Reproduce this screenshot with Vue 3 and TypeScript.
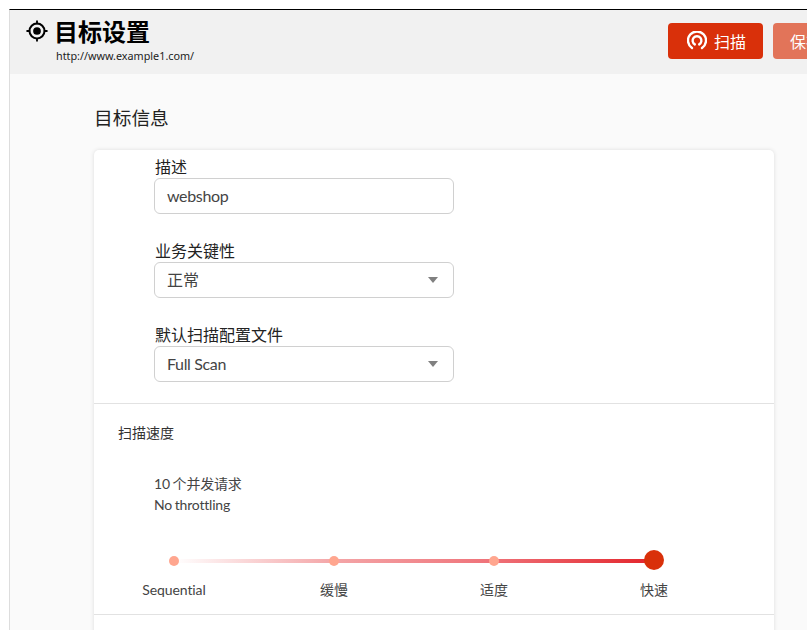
<script setup lang="ts">
const stops: string[] = ['Sequential', '缓慢', '适度', '快速']
</script>

<template>
  <div class="shell">
    <main class="page">
      <header class="topbar">
        <div class="heading">
          <div class="title-row">
            <svg class="target" viewBox="0 0 24 24" width="22" height="22" aria-hidden="true">
              <circle cx="12" cy="12" r="8.2" fill="none" stroke="#000" stroke-width="2.2" />
              <circle cx="12" cy="12" r="4.2" fill="#000" />
              <path d="M12 0.5v4M12 19.5v4M0.5 12h4M19.5 12h4" stroke="#000" stroke-width="2" />
            </svg>
            <h1>目标设置</h1>
          </div>
          <div class="url">http://www.example1.com/</div>
        </div>
        <div class="actions">
          <button class="btn scan" type="button">
            <svg class="scan-icon" viewBox="0 0 20 20" width="20" height="20" fill="none" stroke="#fff" stroke-width="2.4" stroke-linecap="round" aria-hidden="true">
              <path d="M5 17A9 9 0 1 1 15 17" />
              <path d="M7.8 13.4A4.4 4.4 0 1 1 12.2 13.4" />
            </svg>
            <span>扫描</span>
          </button>
          <button class="btn save" type="button">保存</button>
        </div>
      </header>

      <section class="content">
        <h2>目标信息</h2>
        <div class="card">
          <div class="fields">
            <label class="field">
              <span class="label">描述</span>
              <span class="control latin">webshop</span>
            </label>
            <label class="field">
              <span class="label">业务关键性</span>
              <span class="control">正常<i class="caret"></i></span>
            </label>
            <label class="field">
              <span class="label">默认扫描配置文件</span>
              <span class="control latin">Full Scan<i class="caret"></i></span>
            </label>
          </div>
          <div class="speed">
            <div class="speed-title">扫描速度</div>
            <div class="speed-info">
              <div>10 个并发请求</div>
              <div>No throttling</div>
            </div>
            <div class="slider">
              <div class="track"></div>
              <div v-for="(stop, i) in stops" :key="stop" class="stop">
                <span class="dot" :class="{ active: i === stops.length - 1 }"></span>
                <span class="stop-label">{{ stop }}</span>
              </div>
            </div>
          </div>
        </div>
      </section>
    </main>
  </div>
</template>

<style>
html, body { margin: 0; background: #fff; overflow: hidden; }
</style>

<style scoped>
.shell {
  width: 807px;
  height: 630px;
  overflow: hidden;
  box-sizing: border-box;
  padding-top: 9px;
  font-family: Lato, "Noto Sans CJK SC", sans-serif;
  color: #333;
}
.page {
  height: 621px;
  margin-left: 9px;
  border-top: 1px solid #000;
  border-left: 1px solid #ddd;
  background: #fafafa;
  box-sizing: border-box;
  overflow: hidden;
}
.topbar {
  display: flex;
  height: 64px;
  box-sizing: border-box;
  background: #f1f1f1;
  width: 900px;
}
.heading { width: 658px; flex: none; box-sizing: border-box; padding: 6px 0 0 16px; }
.title-row { display: flex; align-items: center; gap: 6px; height: 30px; }
.target { flex: none; }
h1 { margin: 0; font-size: 24px; line-height: 30px; font-weight: 700; color: #000; font-family: "Noto Sans CJK SC", sans-serif; }
.url { margin: 3px 0 0 30px; line-height: 14px; color: #222; font-family: "Noto Sans", sans-serif; font-size: 10.8px; }
.actions { display: flex; gap: 10px; padding-top: 13px; }
.btn {
  width: 95px;
  height: 36px;
  border: 0;
  border-radius: 4px;
  color: #fff;
  font: 400 16px "Noto Sans CJK SC", sans-serif;
  display: flex;
  align-items: center;
  gap: 7px;
  padding: 0 0 0 17px;
  box-sizing: border-box;
}
.scan { background: #d9300a; padding-left: 19px; }
.scan-icon { flex: none; }
.save { background: #e27459; }
.content { padding: 0 33px 0 84px; }
h2 { margin: 0; padding-top: 30px; height: 46px; font-size: 18.72px; line-height: 28px; font-weight: 400; color: #222; }
.card {
  height: 490px;
  background: #fff;
  border-radius: 5px;
  box-shadow: 0 0 4px rgba(0, 0, 0, 0.12);
}
.fields { padding: 5px 0 21px 60px; border-bottom: 1px solid #e2e2e2; }
.field { display: block; margin-bottom: 25px; }
.field:last-child { margin-bottom: 0; }
.label { display: block; height: 23px; font-size: 16px; line-height: 23px; color: #222; padding-left: 1px; }
.control {
  position: relative;
  display: block;
  width: 300px;
  height: 36px;
  box-sizing: border-box;
  border: 1px solid #d0d0d0;
  border-radius: 6px;
  padding-left: 12px;
  font-size: 16px;
  line-height: 33px;
  color: #444;
}
.latin { letter-spacing: -0.35px; }
.caret {
  position: absolute;
  right: 15px;
  top: 14px;
  border: 5.5px solid transparent;
  border-top: 6px solid #808080;
  border-bottom: 0;
}
.speed { height: 211px; padding-top: 19px; box-sizing: border-box; border-bottom: 1px solid #e2e2e2; }
.speed-title { margin-left: 24px; font-size: 14px; line-height: 20px; color: #333; }
.speed-info { margin: 30px 0 0 60px; font-size: 14px; line-height: 21px; color: #444; letter-spacing: -0.2px; word-spacing: -0.6px; }
.slider {
  position: relative;
  display: flex;
  width: 640px;
  margin: 35px 0 0 0;
}
.track {
  position: absolute;
  left: 80px;
  right: 80px;
  top: 9px;
  height: 4px;
  background: linear-gradient(90deg, #fff 0%, #f4a6a8 33%, #ef7279 66%, #e3242b 100%);
}
.stop { position: relative; width: 160px; display: flex; flex-direction: column; align-items: center; }
.dot { width: 10px; height: 10px; margin: 6px 0 14px; border-radius: 50%; background: #ffa68f; }
.dot.active { width: 20px; height: 20px; margin: 0 0 10px; background: #d9300a; }
.stop-label { font-size: 14px; line-height: 20px; color: #444; letter-spacing: -0.1px; }
</style>
